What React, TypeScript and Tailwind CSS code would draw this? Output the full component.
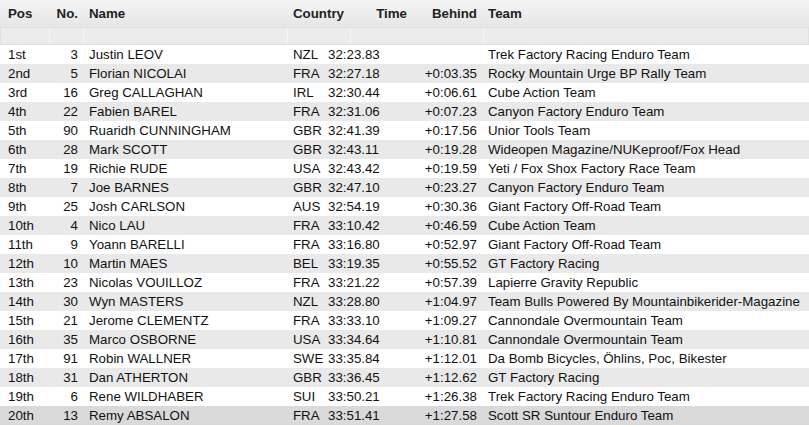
import React from 'react';

type Row = [string, number, string, string, string, string, string];

const rows: Row[] = [
  ['1st', 3, 'Justin LEOV', 'NZL', '32:23.83', '', 'Trek Factory Racing Enduro Team'],
  ['2nd', 5, 'Florian NICOLAI', 'FRA', '32:27.18', '+0:03.35', 'Rocky Mountain Urge BP Rally Team'],
  ['3rd', 16, 'Greg CALLAGHAN', 'IRL', '32:30.44', '+0:06.61', 'Cube Action Team'],
  ['4th', 22, 'Fabien BAREL', 'FRA', '32:31.06', '+0:07.23', 'Canyon Factory Enduro Team'],
  ['5th', 90, 'Ruaridh CUNNINGHAM', 'GBR', '32:41.39', '+0:17.56', 'Unior Tools Team'],
  ['6th', 28, 'Mark SCOTT', 'GBR', '32:43.11', '+0:19.28', 'Wideopen Magazine/NUKeproof/Fox Head'],
  ['7th', 19, 'Richie RUDE', 'USA', '32:43.42', '+0:19.59', 'Yeti / Fox Shox Factory Race Team'],
  ['8th', 7, 'Joe BARNES', 'GBR', '32:47.10', '+0:23.27', 'Canyon Factory Enduro Team'],
  ['9th', 25, 'Josh CARLSON', 'AUS', '32:54.19', '+0:30.36', 'Giant Factory Off-Road Team'],
  ['10th', 4, 'Nico LAU', 'FRA', '33:10.42', '+0:46.59', 'Cube Action Team'],
  ['11th', 9, 'Yoann BARELLI', 'FRA', '33:16.80', '+0:52.97', 'Giant Factory Off-Road Team'],
  ['12th', 10, 'Martin MAES', 'BEL', '33:19.35', '+0:55.52', 'GT Factory Racing'],
  ['13th', 23, 'Nicolas VOUILLOZ', 'FRA', '33:21.22', '+0:57.39', 'Lapierre Gravity Republic'],
  ['14th', 30, 'Wyn MASTERS', 'NZL', '33:28.80', '+1:04.97', 'Team Bulls Powered By Mountainbikerider-Magazine'],
  ['15th', 21, 'Jerome CLEMENTZ', 'FRA', '33:33.10', '+1:09.27', 'Cannondale Overmountain Team'],
  ['16th', 35, 'Marco OSBORNE', 'USA', '33:34.64', '+1:10.81', 'Cannondale Overmountain Team'],
  ['17th', 91, 'Robin WALLNER', 'SWE', '33:35.84', '+1:12.01', 'Da Bomb Bicycles, Öhlins, Poc, Bikester'],
  ['18th', 31, 'Dan ATHERTON', 'GBR', '33:36.45', '+1:12.62', 'GT Factory Racing'],
  ['19th', 6, 'Rene WILDHABER', 'SUI', '33:50.21', '+1:26.38', 'Trek Factory Racing Enduro Team'],
  ['20th', 13, 'Remy ABSALON', 'FRA', '33:51.41', '+1:27.58', 'Scott SR Suntour Enduro Team'],
];

// pos | no | name | country | time | behind | team
const cols = 'grid grid-cols-[49px_34px_204px_35px_90px_70px_1fr]';

const App: React.FC = () => {
  return (
    <div className="w-[809px] h-[427px] bg-white text-[13.3px] text-[#111] font-['Liberation_Sans',Arial,sans-serif] overflow-hidden">
      <div className={`${cols} h-[28px] leading-[28px] font-bold text-[#222] whitespace-nowrap bg-gradient-to-b from-[#f5f5f5] to-[#e6e6e6] border-b border-[#dedede]`}>
        <div className="pl-[8px]">Pos</div>
        <div className="text-right pr-[5px]">No.</div>
        <div className="pl-[6px]">Name</div>
        <div className="pl-[6px]">Country</div>
        <div className="text-right pr-[5px]">Time</div>
        <div className="text-right pr-[5px]">Behind</div>
        <div className="pl-[6px]">Team</div>
      </div>
      <div className="grid grid-cols-[49px_34px_204px_63px_133px_1fr] h-[17px] bg-[#ececec] border-b border-[#dddddd]">
        <div className="border-l border-[#e2e2e2]" />
        <div className="border-l border-[#f5f5f5]" />
        <div className="border-l border-[#f5f5f5]" />
        <div className="border-l border-[#f5f5f5]" />
        <div className="border-l border-[#f5f5f5]" />
        <div className="border-l border-[#f5f5f5] border-r border-r-[#e2e2e2]" />
      </div>
      {rows.map((r, i) => (
        <div
          key={r[0]}
          className={`${cols} h-[19px] leading-[19px] whitespace-nowrap ${
            i === 19 ? 'bg-[#dadada]' : i % 2 === 1 ? 'bg-[#e9e9e9]' : 'bg-white'
          }`}
        >
          <div className="pl-[8px]">{r[0]}</div>
          <div className="text-right pr-[5px]">{r[1]}</div>
          <div className="pl-[6px]">{r[2]}</div>
          <div className="pl-[6px]">{r[3]}</div>
          <div className="pl-[6px]">{r[4]}</div>
          <div className="text-right pr-[5px]">{r[5]}</div>
          <div className="pl-[6px]">{r[6]}</div>
        </div>
      ))}
    </div>
  );
};

export default App;
